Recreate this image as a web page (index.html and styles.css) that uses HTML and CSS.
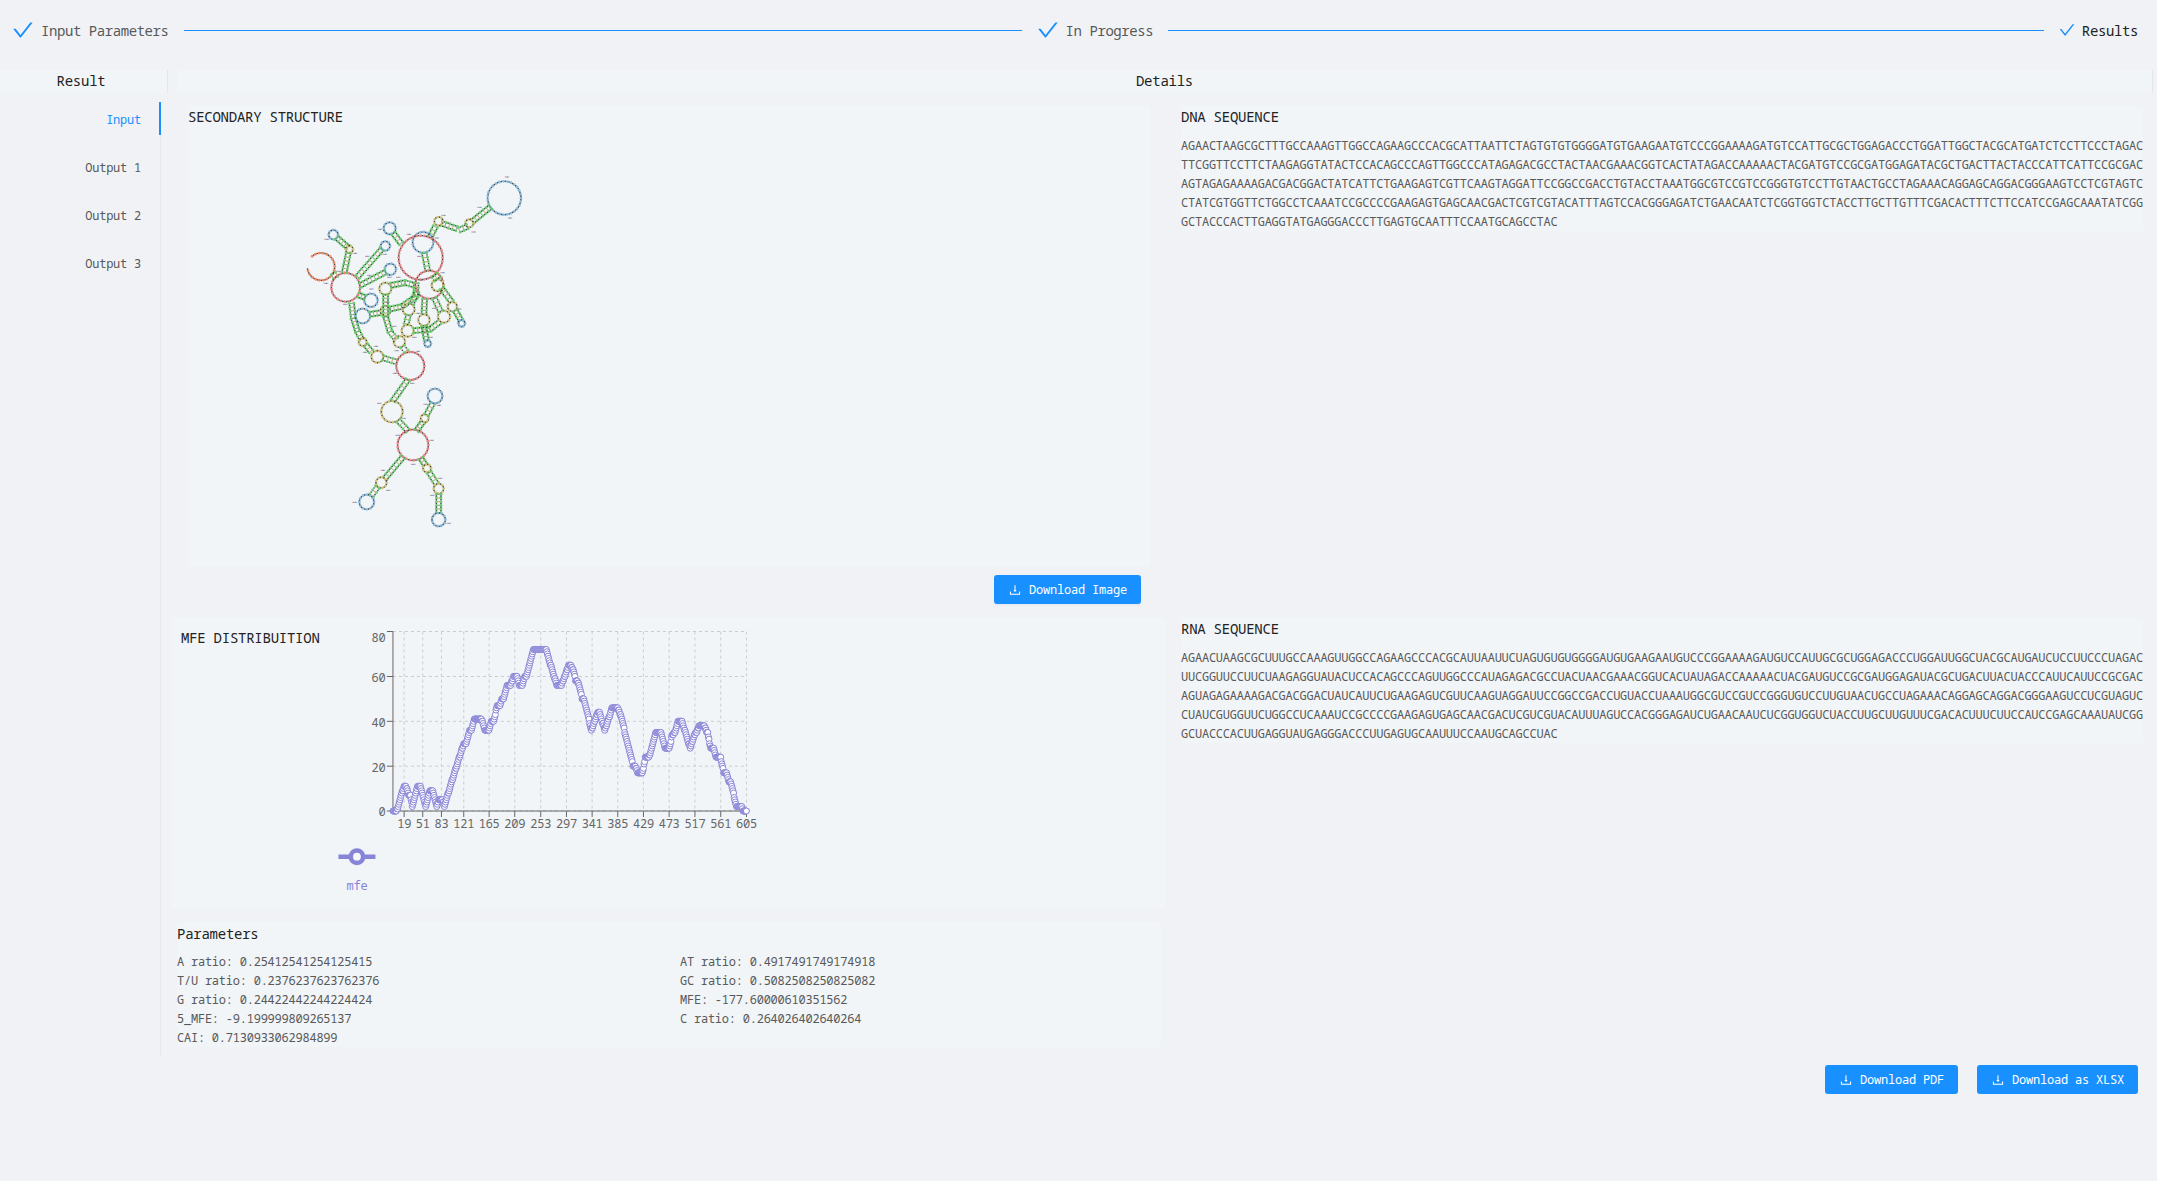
FILE: index.html
```html
<!DOCTYPE html>
<html lang="en">
<head>
<meta charset="utf-8">
<title>Results</title>
<link rel="stylesheet" href="styles.css">
</head>
<body>
<svg width="0" height="0" class="defs">
  <symbol id="check" viewBox="0 0 1024 1024"><path d="M912 190h-69.900c-9.800 0-19.100 4.500-25.100 12.200L404.700 724.500 207 474a32 32 0 0 0-25.100-12.200H112c-6.700 0-10.400 7.700-6.300 12.900l273.900 347c12.800 16.200 37.400 16.200 50.300 0l488.400-618.900c4.100-5.100.4-12.800-6.300-12.800z"/></symbol>
  <symbol id="download" viewBox="0 0 1024 1024"><path d="M505.700 661a8 8 0 0 0 12.600 0l112-141.700c4.100-5.200.4-12.900-6.300-12.900h-74.100V168c0-4.400-3.600-8-8-8h-60c-4.400 0-8 3.600-8 8v338.300H400c-6.700 0-10.400 7.700-6.300 12.900l112 141.800zM878 626h-60c-4.400 0-8 3.600-8 8v154H214V634c0-4.400-3.600-8-8-8h-60c-4.400 0-8 3.600-8 8v198c0 17.700 14.300 32 32 32h684c17.700 0 32-14.300 32-32V634c0-4.400-3.600-8-8-8z"/></symbol>
</svg>

<div class="steps">
  <div class="step"><svg class="check"><use href="#check"/></svg><span>Input Parameters</span></div>
  <div class="rail first"></div>
  <div class="step"><svg class="check"><use href="#check"/></svg><span>In Progress</span></div>
  <div class="rail"></div>
  <div class="step current"><svg class="check small"><use href="#check"/></svg><span>Results</span></div>
</div>

<div class="heads">
  <h3 class="head side">Result</h3>
  <h3 class="head wide">Details</h3>
</div>

<div class="main">
  <nav class="tabs">
    <div class="tab active">Input</div>
    <div class="tab">Output 1</div>
    <div class="tab">Output 2</div>
    <div class="tab">Output 3</div>
  </nav>

  <section class="left">
    <div class="panel structure">
      <h3>SECONDARY STRUCTURE</h3>
      <svg id="rna" viewBox="0 0 750 1140" width="250" height="380"></svg>
    </div>
    <button class="btn image"><svg><use href="#download"/></svg>Download Image</button>
    <div class="panel mfe">
      <h3>MFE DISTRIBUITION</h3>
      <svg id="chart" viewBox="0 0 600 280" width="600" height="280"></svg>
    </div>
    <div class="panel params">
      <h3>Parameters</h3>
      <div class="grid">
        <span>A ratio: 0.25412541254125415</span><span>AT ratio: 0.4917491749174918</span>
        <span>T/U ratio: 0.2376237623762376</span><span>GC ratio: 0.5082508250825082</span>
        <span>G ratio: 0.24422442244224424</span><span>MFE: -177.60000610351562</span>
        <span>5_MFE: -9.199999809265137</span><span>C ratio: 0.264026402640264</span>
        <span>CAI: 0.7130933062984899</span>
      </div>
    </div>
  </section>

  <section class="right">
    <div class="panel dna">
      <h3>DNA SEQUENCE</h3>
      <div class="seq">AGAACTAAGCGCTTTGCCAAAGTTGGCCAGAAGCCCACGCATTAATTCTAGTGTGTGGGGATGTGAAGAATGTCCCGGAAAAGATGTCCATTGCGCTGGAGACCCTGGATTGGCTACGCATGATCTCCTTCCCTAGAC
TTCGGTTCCTTCTAAGAGGTATACTCCACAGCCCAGTTGGCCCATAGAGACGCCTACTAACGAAACGGTCACTATAGACCAAAAACTACGATGTCCGCGATGGAGATACGCTGACTTACTACCCATTCATTCCGCGAC
AGTAGAGAAAAGACGACGGACTATCATTCTGAAGAGTCGTTCAAGTAGGATTCCGGCCGACCTGTACCTAAATGGCGTCCGTCCGGGTGTCCTTGTAACTGCCTAGAAACAGGAGCAGGACGGGAAGTCCTCGTAGTC
CTATCGTGGTTCTGGCCTCAAATCCGCCCCGAAGAGTGAGCAACGACTCGTCGTACATTTAGTCCACGGGAGATCTGAACAATCTCGGTGGTCTACCTTGCTTGTTTCGACACTTTCTTCCATCCGAGCAAATATCGG
GCTACCCACTTGAGGTATGAGGGACCCTTGAGTGCAATTTCCAATGCAGCCTAC</div>
    </div>
    <div class="panel">
      <h3>RNA SEQUENCE</h3>
      <div class="seq">AGAACUAAGCGCUUUGCCAAAGUUGGCCAGAAGCCCACGCAUUAAUUCUAGUGUGUGGGGAUGUGAAGAAUGUCCCGGAAAAGAUGUCCAUUGCGCUGGAGACCCUGGAUUGGCUACGCAUGAUCUCCUUCCCUAGAC
UUCGGUUCCUUCUAAGAGGUAUACUCCACAGCCCAGUUGGCCCAUAGAGACGCCUACUAACGAAACGGUCACUAUAGACCAAAAACUACGAUGUCCGCGAUGGAGAUACGCUGACUUACUACCCAUUCAUUCCGCGAC
AGUAGAGAAAAGACGACGGACUAUCAUUCUGAAGAGUCGUUCAAGUAGGAUUCCGGCCGACCUGUACCUAAAUGGCGUCCGUCCGGGUGUCCUUGUAACUGCCUAGAAACAGGAGCAGGACGGGAAGUCCUCGUAGUC
CUAUCGUGGUUCUGGCCUCAAAUCCGCCCCGAAGAGUGAGCAACGACUCGUCGUACAUUUAGUCCACGGGAGAUCUGAACAAUCUCGGUGGUCUACCUUGCUUGUUUCGACACUUUCUUCCAUCCGAGCAAAUAUCGG
GCUACCCACUUGAGGUAUGAGGGACCCUUGAGUGCAAUUUCCAAUGCAGCCUAC</div>
    </div>
  </section>
</div>

<div class="actions">
  <button class="btn"><svg><use href="#download"/></svg>Download PDF</button>
  <button class="btn"><svg><use href="#download"/></svg>Download as XLSX</button>
</div>
<script src="app.js"></script>
</body>
</html>
```
FILE: styles.css
```css
* { box-sizing: border-box; }
body {
  margin: 0;
  background: #f0f2f6;
  color: #595959;
  font: 12px/19px "Noto Sans Mono", "DejaVu Sans Mono", monospace;
  letter-spacing: -.23px;
  overflow: hidden;
}
.defs { position: absolute; }
h3 {
  margin: 0;
  font-size: 14px;
  line-height: 22px;
  font-weight: 400;
  letter-spacing: -.25px;
  color: #222;
}
.steps {
  display: flex;
  align-items: center;
  height: 60px;
  padding: 0 19px 0 11px;
  font-size: 14px;
  letter-spacing: -.43px;
}
.step { display: flex; align-items: center; gap: 6px; }
.step.current { color: #222; gap: 6px; letter-spacing: -.38px; }
.check { width: 24px; height: 24px; fill: #1890ff; }
.check.small { width: 18px; height: 18px; }
.rail { flex: 1; height: 1px; background: #1890ff; margin: 0 14px 0 15px; }
.rail.first { flex: none; width: 838px; }
.heads { display: flex; gap: 9px; height: 23px; margin-top: 10px; }
.head { background: #f1f5f8; border-right: 1px solid #e4e7ea; text-align: center; }
.head.side { width: 168px; padding-right: 5px; }
.head.wide { width: 1976px; }
.main { display: flex; margin-top: 9px; height: 954px; }
.tabs { width: 161px; border-right: 1px solid #e6e8ec; display: flex; flex-direction: column; gap: 15px; }
.tab { height: 33px; line-height: 35px; text-align: right; padding-right: 18px; margin-right: -1px; border-right: 2px solid transparent; }
.tab.active { color: #1890ff; border-color: #1890ff; }
.panel { background: #f1f5f8; }
.left { width: 1020px; padding: 4px 0 0 11px; display: flex; flex-direction: column; align-items: flex-start; }
.structure { width: 962px; height: 460px; margin-left: 16px; }
#rna { display: block; margin: 32px 0 0 102px; overflow: visible; }
.btn {
  display: flex;
  align-items: center;
  gap: 7px;
  height: 29px;
  padding: 0 14px;
  border: 0;
  border-radius: 3px;
  background: #1890ff;
  color: #fff;
  font: inherit;
  letter-spacing: -.2px;
  box-shadow: 0 2px 0 rgba(0, 0, 0, .03);
}
.btn svg { width: 14px; height: 14px; fill: #fff; }
.image { margin: 9px 0 14px 822px; }
.mfe { width: 993px; height: 290px; padding: 9px 0 0 9px; display: flex; }
#chart { display: block; margin: -6px 0 0 6px; overflow: visible; }
.params { margin: 14px 0 0 5px; width: 984px; height: 125px; padding-top: 1px; }
.grid { display: grid; grid-template-columns: 503px 1fr; margin-top: 7px; }
.right { width: 962px; padding-top: 4px; }
.right .panel { height: 125px; }
.right .dna { margin-bottom: 387px; }
.seq { margin-top: 8px; white-space: pre; }
.actions { display: flex; justify-content: flex-end; gap: 19px; margin-top: 9px; padding-right: 19px; }
.grid-line { stroke: #ccc; stroke-dasharray: 3 3; }
.axis { stroke: #666; }
.tick { fill: #666; }
.legend { fill: #8884d8; }
```
FILE: app.js
```
const NS = 'http://www.w3.org/2000/svg';
function add(parent, name, attrs, text) {
  const e = document.createElementNS(NS, name);
  for (const k in attrs) e.setAttribute(k, attrs[k]);
  if (text !== undefined) e.textContent = text;
  parent.appendChild(e);
  return e;
}

/* ---- MFE chart ---- */
const chart = document.getElementById('chart');
const chartBox = chart.getBoundingClientRect();
const g = add(chart, 'g', { transform: `translate(${350 - chartBox.left} ${610 - chartBox.top})` });
const ticks = { 19: 53.7, 51: 72.3, 83: 91, 121: 113.3, 165: 138.7, 209: 164.3, 253: 190.3, 297: 216, 341: 241.7, 385: 267.3, 429: 293, 473: 318.7, 517: 344.5, 561: 370.3, 605: 396 };
const rows = { 0: 201, 20: 156.2, 40: 111.3, 60: 66.5, 80: 21.5 };
for (const n in rows) {
  add(g, 'line', { class: 'grid-line', x1: 42.5, x2: 396, y1: rows[n], y2: rows[n] });
  add(g, 'line', { class: 'axis', x1: 36.5, x2: 42.5, y1: rows[n], y2: rows[n] });
  add(g, 'text', { class: 'tick', x: 35, y: rows[n] + (n === '80' ? 10 : 5.300), 'text-anchor': 'end' }, n);
}
for (const n in ticks) {
  add(g, 'line', { class: 'grid-line', x1: ticks[n], x2: ticks[n], y1: 21.5, y2: 201 });
  add(g, 'line', { class: 'axis', x1: ticks[n], x2: ticks[n], y1: 201, y2: 207 });
  add(g, 'text', { class: 'tick', x: ticks[n], y: 217.5, 'text-anchor': 'middle' }, n);
}
add(g, 'line', { class: 'axis', x1: 42.5, x2: 42.5, y1: 21.5, y2: 201 });
add(g, 'line', { class: 'axis', x1: 42.5, x2: 396, y1: 201, y2: 201 });

const curve = [127,602,139,602,161,527,166,527,175,555,180,555,186,590,202,527,210,527,226,590,239,540,247,540,259,590,264,568,275,568,282,590,298,533,340,400,348,400,357,362,363,360,372,326,393,326,403,361,415,361,422,333,430,333,440,287,449,287,453,268,460,265,469,226,481,226,489,198,500,198,507,226,516,226,523,200,529,198,549,118,587,118,596,150,619,226,633,226,655,164,661,164,670,186,676,213,684,218,695,265,701,268,723,361,742,306,747,306,763,361,785,293,801,293,812,320,848,468,854,468,862,488,876,488,885,440,896,440,916,366,931,366,944,414,956,414,966,373,973,368,984,332,994,332,1019,414,1033,372,1040,364,1046,346,1061,346,1069,368,1072,370,1080,414,1090,414,1096,440,1110,440,1120,488,1128,488,1134,514,1141,516,1158,589,1173,589,1178,602,1188,602];
function valueAt(x) {
  for (let i = 0; i < curve.length - 2; i += 2) {
    if (x <= curve[i + 2]) return curve[i + 1] + (curve[i + 3] - curve[i + 1]) * (x - curve[i]) / (curve[i + 2] - curve[i]);
  }
  return 602;
}
const pts = [];
for (let i = 0; i <= 604; i++) {
  const x = 127.5 + i * 1060.5 / 604;
  const value = Math.round((603 - valueAt(x)) / 6.730);
  pts.push([x / 3, 201 - value * 2.243]);
}
add(g, 'polyline', { points: pts.map(p => p.join()).join(' '), fill: 'none', stroke: '#8884d8' });
for (const p of pts) add(g, 'circle', { cx: p[0], cy: p[1], r: 3, fill: '#fff', stroke: '#8884d8' });
add(g, 'path', { d: 'M-12 246.700H25', stroke: '#8884d8', 'stroke-width': 4.600 });
add(g, 'circle', { cx: 6.500, cy: 246.700, r: 6.200, fill: '#f7f8fc', stroke: '#8884d8', 'stroke-width': 4.600 });
add(g, 'text', { class: 'legend', x: 6.500, y: 279.500, 'text-anchor': 'middle' }, 'mfe');

/* ---- RNA secondary structure ---- */
const rna = document.getElementById('rna');
const COLORS = { B: '#7fb4dc', R: '#ea7c7c', O: '#ee8158', Y: '#cdbf72', G: '#62cc66' };
function dot(x, y, c) { add(rna, 'circle', { cx: x, cy: y, r: 4.300, fill: COLORS[c], 'fill-opacity': .9 }); }
function bond(x, y) { add(rna, 'circle', { cx: x, cy: y, r: 2.500, fill: '#242c2c', 'fill-opacity': .85 }); }
function loop(c, x, y, r, from = 0, to = 360) {
  const n = Math.max(6, Math.round(2 * Math.PI * r / 11.500 * (to - from) / 360));
  for (let i = 0; i < n; i++) {
    const step = (to - from) / n * Math.PI / 180, a = from * Math.PI / 180 + step * i;
    dot(x + r * Math.cos(a), y + r * Math.sin(a), c);
    bond(x + r * Math.cos(a + step / 2), y + r * Math.sin(a + step / 2));
  }
}
function stem(...p) {
  for (let k = 0; k < p.length - 2; k += 2) {
    const dx = p[k + 2] - p[k], dy = p[k + 3] - p[k + 1], len = Math.hypot(dx, dy);
    const n = Math.max(1, Math.round(len / 12)), nx = -dy / len * 7, ny = dx / len * 7;
    for (let i = 0; i <= n; i++) {
      const x = p[k] + dx * i / n, y = p[k + 1] + dy * i / n;
      add(rna, 'line', { x1: x - nx, y1: y - ny, x2: x + nx, y2: y + ny, stroke: i % 3 ? '#f0705a' : '#777', 'stroke-width': 2.600, 'stroke-opacity': .8 });
      for (const s of [-1, 1]) {
        dot(x + nx * s, y + ny * s, 'G');
        if (i < n) bond(x + nx * s + dx / n / 2, y + ny * s + dy / n / 2);
      }
    }
  }
}
loop('B', 643, 114, 50);
stem(601, 141, 548, 184); loop('Y', 538, 190, 12);
stem(532, 200, 508, 210); stem(500, 206, 455, 190); loop('Y', 446, 184, 13);
stem(436, 200, 420, 232); loop('B', 399, 247, 31);
loop('R', 392, 293, 66); stem(403, 280, 413, 331); loop('R', 418, 374, 42);
loop('B', 299, 205, 18); stem(311, 221, 333, 250);
loop('O', 93, 320, 41, -130, 178); stem(127, 350, 140, 343);
loop('R', 167, 382, 43);
loop('B', 130, 224, 14); stem(140, 233, 174, 262); loop('Y', 178, 268, 11); stem(175, 280, 163, 337);
loop('B', 286, 258, 14); stem(275, 268, 203, 350);
loop('B', 301, 328, 17); stem(287, 336, 211, 376);
loop('B', 243, 421, 20); stem(224, 412, 205, 405);
stem(185, 430, 190, 475, 203, 515, 215, 538); loop('Y', 218, 546, 12); stem(228, 556, 243, 574);
loop('Y', 262, 590, 18); stem(280, 594, 320, 606); loop('R', 361, 618, 42);
loop('B', 218, 468, 22); stem(240, 463, 272, 458); loop('Y', 286, 453, 15);
stem(301, 447, 335, 440, 378, 410, 378, 370); loop('Y', 286, 386, 18);
stem(303, 376, 345, 368, 372, 375); stem(287, 404, 287, 470, 300, 515, 318, 538);
loop('Y', 328, 545, 17); stem(338, 560, 348, 574);
loop('Y', 356, 448, 18); stem(365, 432, 380, 395); stem(355, 466, 349, 492);
loop('Y', 353, 512, 18); stem(371, 512, 420, 508, 450, 485); loop('Y', 462, 470, 18);
stem(451, 453, 434, 416); stem(404, 418, 402, 462); loop('Y', 402, 480, 17);
stem(402, 498, 409, 540); loop('B', 413, 551, 10); loop('Y', 443, 376, 18);
stem(430, 358, 446, 345); stem(455, 385, 484, 425); loop('Y', 487, 440, 14);
stem(496, 452, 512, 480); loop('B', 515, 490, 10);
stem(353, 660, 309, 722); loop('Y', 306, 755, 32); stem(325, 782, 353, 812);
loop('R', 369, 855, 46); stem(380, 812, 399, 785); loop('Y', 404, 775, 12);
stem(410, 764, 428, 730); loop('B', 435, 708, 22);
stem(338, 892, 285, 955); loop('Y', 274, 968, 16); stem(262, 982, 245, 1006); loop('B', 230, 1026, 22);
stem(393, 895, 405, 914); loop('Y', 411, 925, 12); stem(418, 938, 440, 972);
loop('Y', 446, 986, 15); stem(446, 1003, 446, 1058); loop('B', 446, 1079, 20);

/* position marks beside the loops */
const marks = [651,51,660,174,461,166,551,216,569,142,508,447,270,208,110,238,195,280,232,289,284,283,238,346,298,352,325,352,108,370,146,334,166,433,244,387,313,499,357,223,440,234,388,289,458,338,393,360,292,427,373,532,422,532,258,559,225,577,433,445,384,460,320,572,384,574,315,640,367,670,268,730,341,775,407,733,447,736,323,826,425,841,370,913,279,931,295,991,194,1027,451,955,427,1006,476,1090];
for (let i = 0; i < marks.length; i += 2) {
  ['#a8925a', '#b05a8a', '#4a5498', '#6a9fb8'].forEach((c, k) =>
    add(rna, 'rect', { x: marks[i] - 7 + k * 3.500, y: marks[i + 1] - 1.500, width: 3.200, height: 3, fill: c, 'fill-opacity': .85 }));
}
```
